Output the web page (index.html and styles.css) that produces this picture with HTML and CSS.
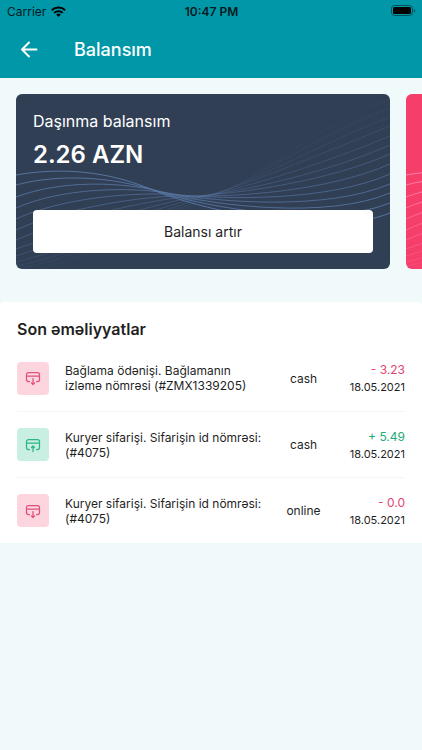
FILE: index.html
```html
<!DOCTYPE html>
<html lang="az">
<head>
<meta charset="utf-8">
<meta name="viewport" content="width=device-width, initial-scale=1">
<title>Balansım</title>
<link rel="stylesheet" href="styles.css">
</head>
<body>
<svg class="sprite" aria-hidden="true">
  <symbol id="waves" viewBox="0 0 374 175" preserveAspectRatio="none">
    <g fill="none" stroke="currentColor">
      <path opacity=".9" d="M0 81C45 73 92 77 137 96S310 145 374 119"/>
      <path opacity=".84" d="M0 91C45 79 99 83 144 98S310 135 374 109"/>
      <path opacity=".78" d="M0 103C45 86 106 87 151 99S310 126 374 99"/>
      <path opacity=".7" d="M0 114C45 94 113 92 158 100S310 117 374 90"/>
      <path opacity=".62" d="M0 125C45 104 120 97 165 101S310 108 374 80"/>
      <path opacity=".54" d="M0 136C45 115 127 101 172 102S310 98 374 70"/>
      <path opacity=".46" d="M0 146C45 126 134 105 179 102S310 88 374 60"/>
      <path opacity=".38" d="M0 155C45 139 141 108 186 102S310 79 374 51"/>
      <path opacity=".3" d="M0 162C45 148 148 111 193 101S310 69 374 42"/>
      <path opacity=".24" d="M0 168C45 158 155 113 200 99S310 58 374 32"/>
      <path opacity=".18" d="M0 172C45 165 162 114 207 97S310 48 374 23"/>
      <path opacity=".12" d="M0 175C45 170 169 115 214 94S310 38 374 14"/>
      <path opacity=".08" d="M10 178C55 172 176 115 221 91S310 28 374 5"/>
    </g>
  </symbol>
  <symbol id="pay-out" viewBox="0 0 16 16">
    <g fill="none" stroke="currentColor" stroke-width="1.250" stroke-linecap="round" stroke-linejoin="round">
      <path d="M4.500 11.500H3.500a2 2 0 0 1-2-2v-5a2 2 0 0 1 2-2h9a2 2 0 0 1 2 2v5a2 2 0 0 1-2 2h-1M1.500 6h13M8 8.500v6M6.500 13 8 14.500 9.500 13"/>
    </g>
  </symbol>
  <symbol id="pay-in" viewBox="0 0 16 16">
    <g fill="none" stroke="currentColor" stroke-width="1.250" stroke-linecap="round" stroke-linejoin="round">
      <path d="M4.500 12.500H3.500a2 2 0 0 1-2-2v-6a2 2 0 0 1 2-2h9a2 2 0 0 1 2 2v6a2 2 0 0 1-2 2h-1M1.500 6h13M8 14.500v-5M6.500 10.500 8 9l1.500 1.500"/>
    </g>
  </symbol>
</svg>

<header class="top">
  <div class="status">
    <span class="carrier">Carrier
      <svg class="wifi" viewBox="0 0 15 11" aria-hidden="true"><path fill="none" stroke="currentColor" stroke-width="2" d="M.8 4.300a9.600 9.600 0 0 1 13.400 0M3.200 6.900a6.200 6.200 0 0 1 8.600 0"/><path fill="currentColor" d="M5.200 8.600a3.400 3.400 0 0 1 4.600 0L7.500 11z"/></svg>
    </span>
    <span class="clock">10:47 PM</span>
    <svg class="battery" viewBox="0 0 25 12" aria-hidden="true"><rect x=".5" y=".5" width="21" height="10" rx="3" fill="none" stroke="currentColor" opacity=".45"/><rect x="2" y="2" width="18" height="7" rx="1.500" fill="currentColor"/><path d="M23 4v3.500c.8-.3 1.200-1 1.200-1.700S23.800 4.300 23 4z" fill="currentColor" opacity=".5"/></svg>
  </div>
  <div class="bar">
    <button class="back" type="button" aria-label="Geri">
      <svg viewBox="0 0 18 18" aria-hidden="true"><path fill="none" stroke="currentColor" stroke-width="2" stroke-linecap="round" stroke-linejoin="round" d="M16.500 8.500H2M9 1.500 2 8.500 9 15.500"/></svg>
    </button>
    <h1 class="title">Balansım</h1>
  </div>
</header>

<main>
  <div class="cards">
    <section class="card card-navy">
      <svg class="waves" aria-hidden="true"><use href="#waves"/></svg>
      <h2 class="card-label">Daşınma balansım</h2>
      <p class="amount">2.26 AZN</p>
      <button class="topup" type="button">Balansı artır</button>
    </section>
    <section class="card card-pink">
      <svg class="waves" aria-hidden="true"><use href="#waves"/></svg>
    </section>
  </div>

  <section class="history">
    <h2 class="history-title">Son əməliyyatlar</h2>
    <ul class="list">
      <li class="row">
        <span class="badge out"><svg aria-hidden="true"><use href="#pay-out"/></svg></span>
        <p class="desc">Bağlama ödənişi. Bağlamanın izləmə nömrəsi (#ZMX1339205)</p>
        <span class="method">cash</span>
        <div class="sum"><span class="minus">- 3.23</span><time datetime="2021-05-18">18.05.2021</time></div>
      </li>
      <li class="row">
        <span class="badge in"><svg aria-hidden="true"><use href="#pay-in"/></svg></span>
        <p class="desc">Kuryer sifarişi. Sifarişin id nömrəsi: (#4075)</p>
        <span class="method">cash</span>
        <div class="sum"><span class="plus">+ 5.49</span><time datetime="2021-05-18">18.05.2021</time></div>
      </li>
      <li class="row">
        <span class="badge out"><svg aria-hidden="true"><use href="#pay-out"/></svg></span>
        <p class="desc">Kuryer sifarişi. Sifarişin id nömrəsi: (#4075)</p>
        <span class="method">online</span>
        <div class="sum"><span class="minus">- 0.0</span><time datetime="2021-05-18">18.05.2021</time></div>
      </li>
    </ul>
  </section>
</main>
</body>
</html>
```
FILE: styles.css
```css
* { box-sizing: border-box; }
body {
  margin: 0;
  min-height: 100vh;
  background: #f1fafa;
  color: #1f1f1f;
  font-family: Inter, "Liberation Sans", sans-serif;
}
h1, h2, p, ul { margin: 0; padding: 0; }
button { border: 0; font: inherit; cursor: pointer; }
.sprite { position: absolute; width: 0; height: 0; }

.top { background: #0098a8; }
.status {
  display: grid;
  grid-template-columns: 1fr auto 1fr;
  align-items: center;
  height: 22px;
  padding: 0 6px 0 7px;
  color: #06191c;
  font-size: 12px;
}
.carrier { display: flex; align-items: center; gap: 5px; }
.wifi { width: 15px; height: 11px; color: #000; }
.clock { font-weight: 600; }
.battery { width: 25px; height: 12px; justify-self: end; color: #000; }
.bar {
  display: flex;
  align-items: center;
  gap: 36px;
  height: 56px;
  padding: 0 20px;
  color: #fff;
}
.back { display: flex; padding: 0; background: none; color: inherit; }
.back svg { width: 18px; height: 18px; }
.title { font-size: 18px; font-weight: 500; line-height: 26px; }

.cards {
  display: flex;
  gap: 16px;
  padding: 16px 16px 33px;
  overflow-x: auto;
  scrollbar-width: none;
}
.card {
  position: relative;
  flex: 0 0 calc(100% - 16px);
  padding: 16px 17px;
  border-radius: 6px;
  overflow: hidden;
}
.card-navy { background: #313f55; color: #fff; }
.card-pink { background: #f63e6b; }
.waves { position: absolute; inset: 0; width: 100%; height: 100%; }
.card-navy .waves { color: #5b7ba8; }
.card-pink .waves { color: #ff86b4; }
.card-label, .amount, .topup { position: relative; }
.card-label { font-size: 16px; font-weight: 400; line-height: 22px; }
.amount { margin: 7px 0 39px; font-size: 24px; font-weight: 600; line-height: 32px; }
.topup {
  display: block;
  width: 100%;
  height: 43px;
  border-radius: 4px;
  background: #fff;
  color: #1f1f1f;
  font-size: 14px;
}

.history { padding: 16px 17px 0; background: #fff; border-radius: 4px 4px 0 0; }
.history-title { padding-bottom: 5px; font-size: 16px; font-weight: 600; line-height: 22px; }
.list { list-style: none; }
.row {
  display: grid;
  grid-template-columns: 32px 205px 1fr 68px;
  align-items: center;
  column-gap: 16px;
  height: 66px;
}
.row + .row { border-top: 1px solid #f5f6f6; }
.badge {
  display: grid;
  place-items: center;
  height: 33px;
  border-radius: 4px;
}
.badge svg { width: 16px; height: 16px; }
.out { background: #fdd5df; color: #e0507f; }
.in { background: #c9eee2; color: #2bb58a; }
.desc { font-size: 12px; line-height: 15px; }
.method { font-size: 12px; text-align: center; }
.sum { display: flex; flex-direction: column; align-items: flex-end; font-size: 12px; line-height: 18px; }
.sum time { font-size: 11px; line-height: 16px; }
.minus { color: #e2456f; }
.plus { color: #1fab78; }
```
